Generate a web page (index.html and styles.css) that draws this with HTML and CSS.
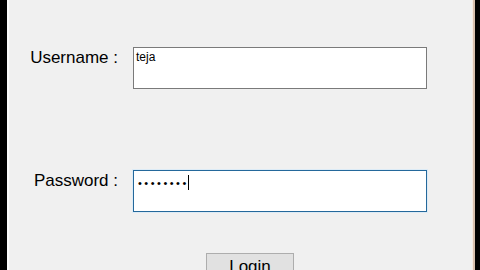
FILE: index.html
```html
<!DOCTYPE html>
<html lang="en">
<head>
    <meta charset="UTF-8">
    <meta name="viewport" content="width=device-width, initial-scale=1.0">
    <title>Login</title>
    <link rel="stylesheet" href="styles.css">
</head>
<body>
    <div class="window">
        <div class="login-form">
            <div class="form-row">
                <label class="form-label">Username :</label>
                <div class="textbox">teja</div>
            </div>

            <div class="form-row form-row--password">
                <label class="form-label">Password :</label>
                <div class="textbox textbox--focused">
                    <span class="password-dots">••••••••</span><span class="caret"></span>
                </div>
            </div>

            <div class="form-actions">
                <button class="button">Login</button>
            </div>
        </div>
    </div>
</body>
</html>
```

FILE: styles.css
```css
:root {
    --clr-form: #f0f0f0;
    --clr-text: #000000;
    --clr-border: #7a7a7a;
    --clr-focus: #24689b;
    --font-family: "Liberation Sans", Arial, sans-serif;
}

* {
    margin: 0;
    padding: 0;
    box-sizing: border-box;
}

body {
    background: #000;
    height: 270px;
    overflow: hidden;
    font-family: var(--font-family);
    color: var(--clr-text);
}

.window {
    margin-left: 7px;
    width: 466px;
    height: 270px;
    background: var(--clr-form);
    border-left: 2px solid #fbfbfb;
    border-right: 1px solid #f4e9e0;
    box-shadow: 2px 0 0 #d6bfad;
}

.login-form {
    padding-top: 47px;
}

.form-row {
    display: grid;
    grid-template-columns: 109px 294px;
    column-gap: 15px;
    align-items: start;
}

.form-row--password {
    margin-top: 81px;
}

.form-label {
    margin-top: 1px;
    font-size: 17px;
    line-height: 20px;
    text-align: right;
}

.textbox {
    height: 42px;
    background: #fff;
    border: 1px solid var(--clr-border);
    padding: 2px 2px;
    font-size: 12px;
    line-height: 14px;
    display: flex;
    align-items: flex-start;
}

.textbox--focused {
    border-color: var(--clr-focus);
    box-shadow: 0 0 0 1px #dcebf6;
    padding-left: 4px;
}

.password-dots {
    font-size: 11px;
    letter-spacing: 2.5px;
    line-height: 16px;
    margin-top: 2px;
}

.caret {
    width: 1px;
    height: 15px;
    margin-top: 2px;
    margin-left: -1px;
    background: #000;
}

.form-actions {
    margin-top: 41px;
    padding-left: 197px;
}

.button {
    width: 88px;
    height: 30px;
    background: #e1e1e1;
    border: 1px solid #adadad;
    font-family: inherit;
    font-size: 17px;
    line-height: 20px;
    padding-top: 3px;
    color: var(--clr-text);
    display: flex;
    justify-content: center;
    align-items: flex-start;
}
```
